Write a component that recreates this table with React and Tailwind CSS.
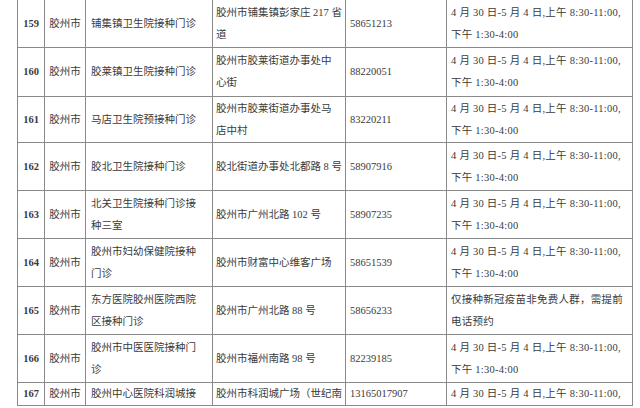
const TIME = ["4 月 30 日-5 月 4 日,上午 8:30-11:00,", "下午 1:30-4:00"];

const rows = [
  { no: "159", h: "h-[48px]", name: ["铺集镇卫生院接种门诊"], addr: ["胶州市铺集镇彭家庄 217 省", "道"], tel: "58651213", time: TIME },
  { no: "160", h: "h-[49px]", name: ["胶莱镇卫生院接种门诊"], addr: ["胶州市胶莱街道办事处中", "心街"], tel: "88220051", time: TIME },
  { no: "161", h: "h-[46px]", name: ["马店卫生院预接种门诊"], addr: ["胶州市胶莱街道办事处马", "店中村"], tel: "83220211", time: TIME },
  { no: "162", h: "h-[48px]", name: ["胶北卫生院接种门诊"], addr: ["胶北街道办事处北都路 8 号"], tel: "58907916", time: TIME },
  { no: "163", h: "h-[48px]", name: ["北关卫生院接种门诊接", "种三室"], addr: ["胶州市广州北路 102 号"], tel: "58907235", time: TIME },
  { no: "164", h: "h-[48px]", name: ["胶州市妇幼保健院接种", "门诊"], addr: ["胶州市财富中心维客广场"], tel: "58651539", time: TIME },
  { no: "165", h: "h-[48px]", name: ["东方医院胶州医院西院", "区接种门诊"], addr: ["胶州市广州北路 88 号"], tel: "58656233", time: ["仅接种新冠疫苗非免费人群，需提前", "电话预约"] },
  { no: "166", h: "h-[48px]", name: ["胶州市中医医院接种门", "诊"], addr: ["胶州市福州南路 98 号"], tel: "82239185", time: TIME },
  { no: "167", h: "h-[21px]", name: ["胶州中心医院科润城接"], addr: ["胶州市科润城广场（世纪南"], tel: "13165017907", time: [TIME[0]] },
];

function Lines({ items }) {
  return items.map((t, i) => (
    <div key={i} className="leading-[22px] whitespace-nowrap">
      {t}
    </div>
  ));
}

export default function App() {
  return (
    <div className="w-[640px] h-[408px] bg-white overflow-hidden pl-[17px] text-[#3a3a3a] text-[10.5px] [font-family:'Liberation_Serif','Noto_Sans_CJK_SC',serif]">
      <table className="-mt-px border-collapse table-fixed w-[615px]">
        <colgroup>
          <col className="w-[27px]" />
          <col className="w-[41px]" />
          <col className="w-[127px]" />
          <col className="w-[133px]" />
          <col className="w-[101px]" />
          <col className="w-[186px]" />
        </colgroup>
        <tbody>
          {rows.map((r) => (
            <tr key={r.no} className={r.h}>
              <td className="border border-[#8a8a8a] text-center font-bold p-0">{r.no}</td>
              <td className="border border-[#8a8a8a] text-center p-0">胶州市</td>
              <td className="border border-[#8a8a8a] pl-[5px] p-0 overflow-hidden">
                <Lines items={r.name} />
              </td>
              <td className="border border-[#8a8a8a] pl-[3px] p-0 overflow-hidden">
                <Lines items={r.addr} />
              </td>
              <td className="border border-[#8a8a8a] pl-[4px] p-0">{r.tel}</td>
              <td className="border border-[#8a8a8a] pl-[4px] p-0 tracking-[0.25px] overflow-hidden">
                <Lines items={r.time} />
              </td>
            </tr>
          ))}
        </tbody>
      </table>
    </div>
  );
}
